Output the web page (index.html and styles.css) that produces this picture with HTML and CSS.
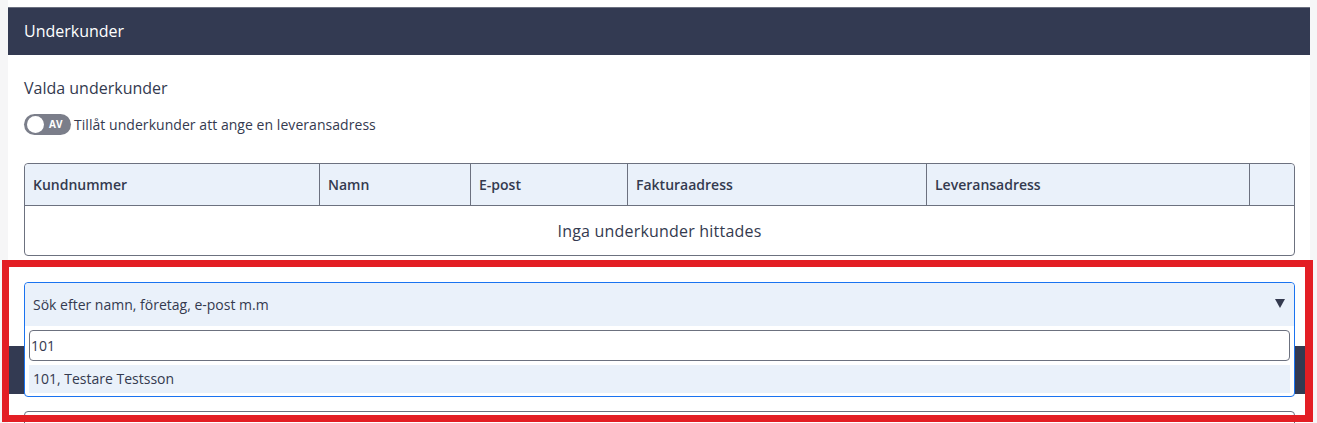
FILE: index.html
```html
<!DOCTYPE html>
<html lang="sv">
<head>
    <meta charset="UTF-8">
    <meta name="viewport" content="width=device-width, initial-scale=1.0">
    <title>Underkunder</title>
    <link rel="stylesheet" href="styles.css">
</head>
<body>
    <div class="page">
        <section class="card">
            <div class="card-header">Underkunder</div>
            <div class="card-body">
                <h3 class="sub-title">Valda underkunder</h3>
                <label class="switch-row">
                    <span class="switch"><span class="knob"></span><span class="switch-text">AV</span></span>
                    Tillåt underkunder att ange en leveransadress
                </label>

                <table class="grid">
                    <thead>
                        <tr>
                            <th class="c1">Kundnummer</th>
                            <th class="c2">Namn</th>
                            <th class="c3">E-post</th>
                            <th class="c4">Fakturaadress</th>
                            <th class="c5">Leveransadress</th>
                            <th class="c6"></th>
                        </tr>
                    </thead>
                    <tbody>
                        <tr>
                            <td colspan="6" class="empty">Inga underkunder hittades</td>
                        </tr>
                    </tbody>
                </table>

                <!-- Sökfältet, öppet -->
                <div class="picker">
                    <div class="picker-box">
                        <div class="picker-head">
                            <span>Sök efter namn, företag, e-post m.m</span>
                            <span class="caret"></span>
                        </div>
                        <div class="picker-menu">
                            <input class="picker-input" type="text" value="101">
                            <div class="picker-option">101, Testare Testsson</div>
                        </div>
                    </div>
                </div>
            </div>
        </section>

        <section class="card">
            <div class="card-header next"></div>
            <div class="card-body">
                <div class="next-box"></div>
            </div>
        </section>

        <div class="mark"></div>
    </div>
</body>
</html>
```

FILE: styles.css
```css
body {
    margin: 0;
    padding: 0;
    background-color: #f6f6f7;
    font-family: "Open Sans", "Noto Sans", sans-serif;
    color: #343a4f;
    height: 423px;
    overflow: hidden;
}
.page {
    position: relative;
    margin: 0 7px 0 8px;
    background-color: #fff;
    padding-top: 7px;
    height: 416px;
}
.card-header {
    background-color: #333a52;
    border-top: 1px solid #6b7080;
    color: #fff;
    font-size: 16px;
    line-height: 47px;
    height: 47px;
    padding-left: 16px;
}
.card-header.next {
    border-top: none;
    height: 48px;
}
.card-body {
    padding: 21px 15px 21px 16px;
}
.sub-title {
    margin: 0;
    font-size: 16px;
    font-weight: 400;
    line-height: 24px;
}
.switch-row {
    display: flex;
    align-items: center;
    gap: 3px;
    margin-top: 14px;
    font-size: 14px;
    line-height: 21px;
    letter-spacing: 0.05px;
}
.switch {
    position: relative;
    display: inline-flex;
    align-items: center;
    width: 47px;
    height: 21px;
    border-radius: 11px;
    background-color: #7b7e8a;
}
.knob {
    width: 17px;
    height: 17px;
    border-radius: 50%;
    background-color: #fff;
    margin-left: 3px;
}
.switch-text {
    color: #fff;
    font-size: 10px;
    font-weight: 700;
    margin-left: 5px;
}
.grid {
    width: 1271px;
    box-sizing: border-box;
    margin-top: 28px;
    border-collapse: separate;
    border-spacing: 0;
    border: 1px solid #6c717f;
    border-radius: 4px;
    table-layout: fixed;
    font-size: 14px;
}
.grid th {
    box-sizing: border-box;
    background-color: #eaf1fa;
    text-align: left;
    font-weight: 600;
    height: 42px;
    padding: 0 8px;
    border-right: 1px solid #6c717f;
    border-bottom: 1px solid #6c717f;
}
.grid th:first-child {
    border-top-left-radius: 4px;
}
.grid th:last-child {
    border-right: none;
    border-top-right-radius: 4px;
}
.grid .c1 { width: 295px; }
.grid .c2 { width: 151px; }
.grid .c3 { width: 157px; }
.grid .c4 { width: 299px; }
.grid .c5 { width: 323px; }
.grid .c6 { width: 44px; }
.empty {
    text-align: center;
    font-size: 16px;
    height: 49px;
    padding: 0;
    letter-spacing: 0.2px;
}
.picker {
    position: relative;
    margin-top: 26px;
    height: 43px;
}
.picker-box {
    position: absolute;
    top: 0;
    left: 0;
    width: 1271px;
    box-sizing: border-box;
    border: 1px solid #1a73f0;
    border-radius: 4px;
    background-color: #fff;
    z-index: 5;
}
.picker-head {
    display: flex;
    justify-content: space-between;
    align-items: center;
    height: 43px;
    padding: 0 9px 0 8px;
    background-color: #eaf1fa;
    border-radius: 4px 4px 0 0;
    font-size: 14px;
}
.caret {
    width: 0;
    height: 0;
    border-left: 5px solid transparent;
    border-right: 5px solid transparent;
    border-top: 9px solid #343a4f;
    margin-bottom: 2px;
}
.picker-menu {
    padding: 4px 4px 3px 4px;
}
.picker-input {
    display: block;
    width: 1261px;
    box-sizing: border-box;
    height: 31px;
    border: 1px solid #6c717f;
    border-radius: 4px;
    padding: 0 1px;
    font-family: "Open Sans", "Noto Sans", sans-serif;
    font-size: 14px;
    color: #343a4f;
    outline: none;
}
.picker-option {
    margin-top: 4px;
    height: 28px;
    line-height: 28px;
    padding-left: 4px;
    background-color: #eaf1fa;
    font-size: 14px;
}
.next-box {
    margin-top: -4px;
    height: 30px;
    border: 1px solid #6c717f;
    border-radius: 4px;
}
/* röd markering ovanpå */
.mark {
    position: absolute;
    left: -6px;
    top: 260px;
    width: 1311px;
    height: 162px;
    box-sizing: border-box;
    border: 7px solid #e31e24;
    border-right-width: 8px;
    z-index: 10;
}
```
